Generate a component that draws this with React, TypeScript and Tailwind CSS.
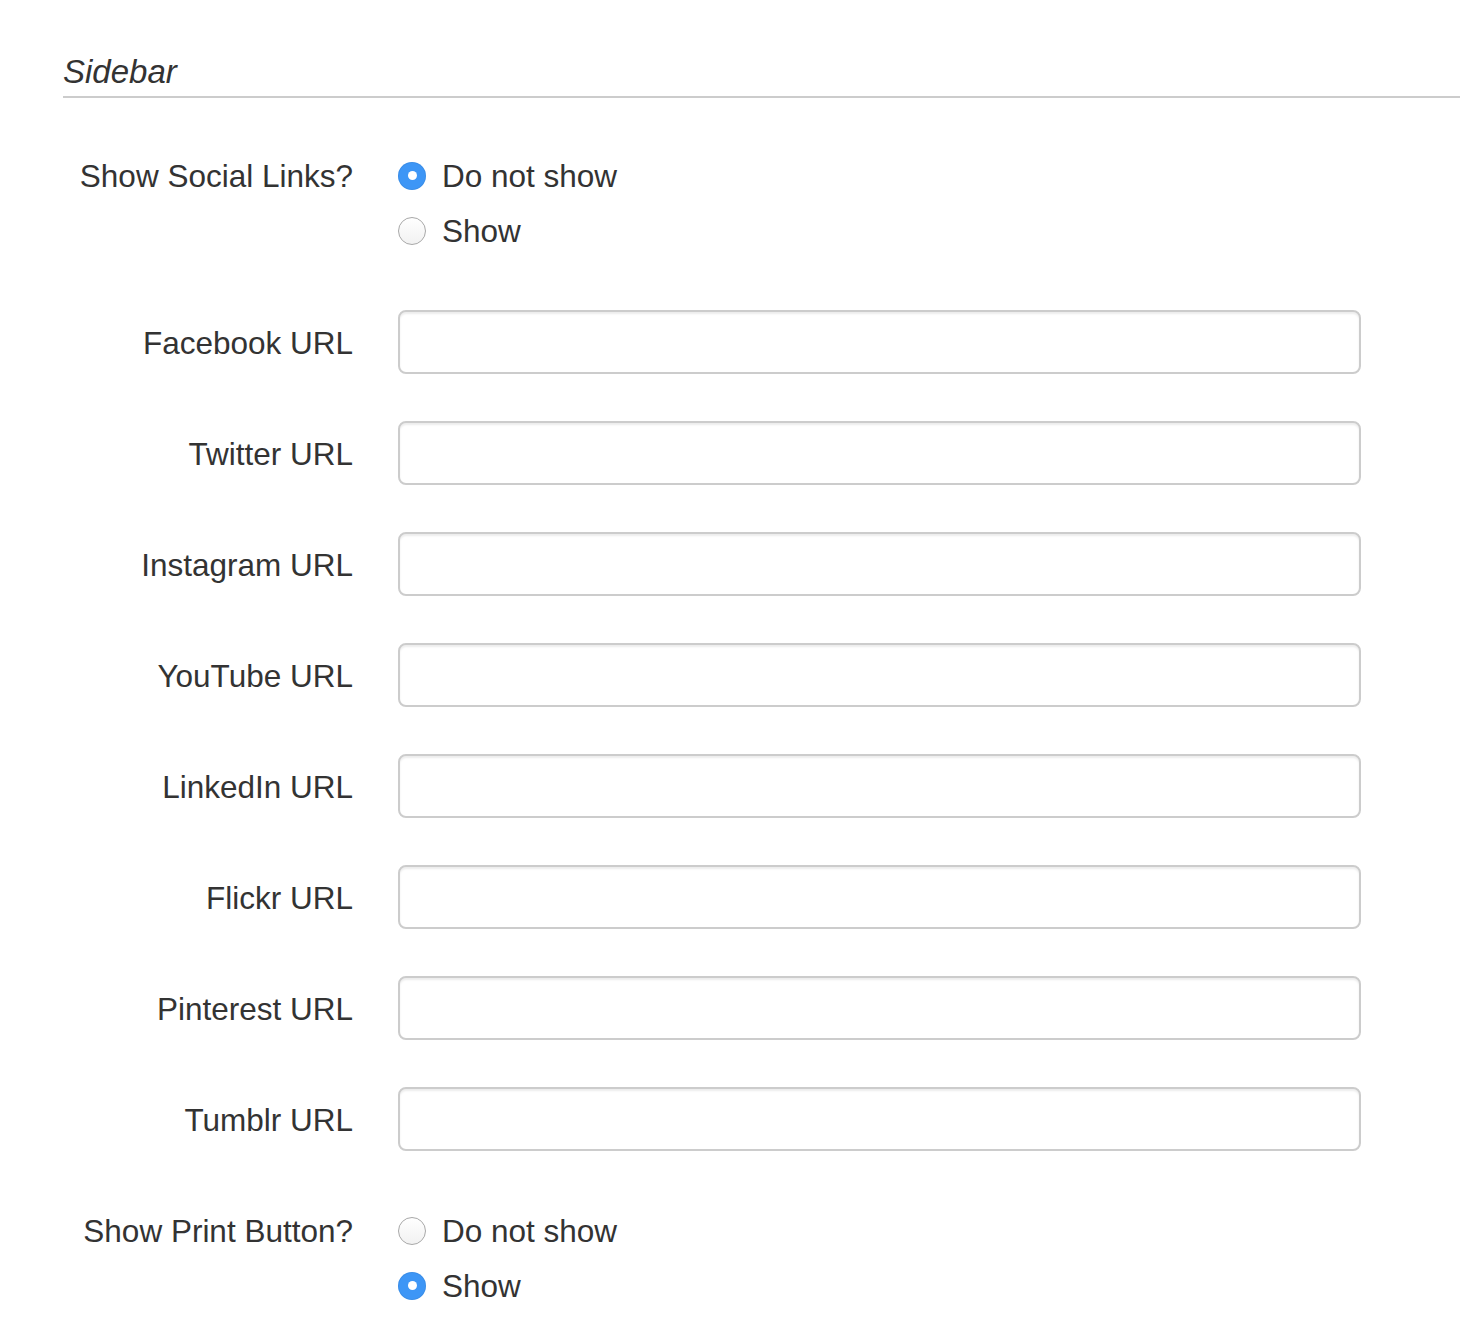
import React from 'react'

const urlFields = [
  'Facebook URL',
  'Twitter URL',
  'Instagram URL',
  'YouTube URL',
  'LinkedIn URL',
  'Flickr URL',
  'Pinterest URL',
  'Tumblr URL',
]

const Radio: React.FC<{ checked: boolean; label: string }> = ({ checked, label }) => (
  <label className="h-[55px] flex items-center">
    {checked ? (
      <span className="w-[28px] h-[28px] rounded-full bg-[#3d96f6] flex items-center justify-center shadow-[inset_0_0_0_1px_rgba(0,0,0,0.06)]">
        <span className="w-[9px] h-[9px] rounded-full bg-white" />
      </span>
    ) : (
      <span className="w-[28px] h-[28px] rounded-full border-[1.5px] border-[#a8a8a8] bg-gradient-to-b from-white to-[#f2f2f2]" />
    )}
    <span className="ml-[16px] pt-[3px]">{label}</span>
  </label>
)

const RadioGroup: React.FC<{ label: string; value: number }> = ({ label, value }) => (
  <div className="flex">
    <div className="w-[290px] h-[55px] pt-[3px] flex items-center justify-end">{label}</div>
    <div className="ml-[45px] flex flex-col">
      <Radio checked={value === 0} label="Do not show" />
      <Radio checked={value === 1} label="Show" />
    </div>
  </div>
)

export default function App() {
  return (
    <div
      className="min-h-[1340px] bg-white text-[#333] pt-[52px] pl-[63px]"
      style={{ fontFamily: '"Liberation Sans", Arial, sans-serif' }}
    >
      <h2 className="text-[33px] italic leading-[40px] pb-[4px] border-b-2 border-[#cccccc]">Sidebar</h2>

      <form className="mt-[50px] text-[31.5px]">
        <RadioGroup label="Show Social Links?" value={0} />

        <div className="mt-[52px] flex flex-col gap-[47px]">
          {urlFields.map((name) => (
            <div key={name} className="flex items-center">
              <div className="w-[290px] pt-[3px] text-right">{name}</div>
              <input
                type="text"
                className="ml-[45px] w-[963px] h-[64px] rounded-[8px] border-2 border-[#cccccc] bg-white px-[24px] shadow-[inset_0_2px_2px_rgba(0,0,0,0.075)] outline-none"
              />
            </div>
          ))}
        </div>

        <div className="mt-[52px]">
          <RadioGroup label="Show Print Button?" value={1} />
        </div>
      </form>
    </div>
  )
}
